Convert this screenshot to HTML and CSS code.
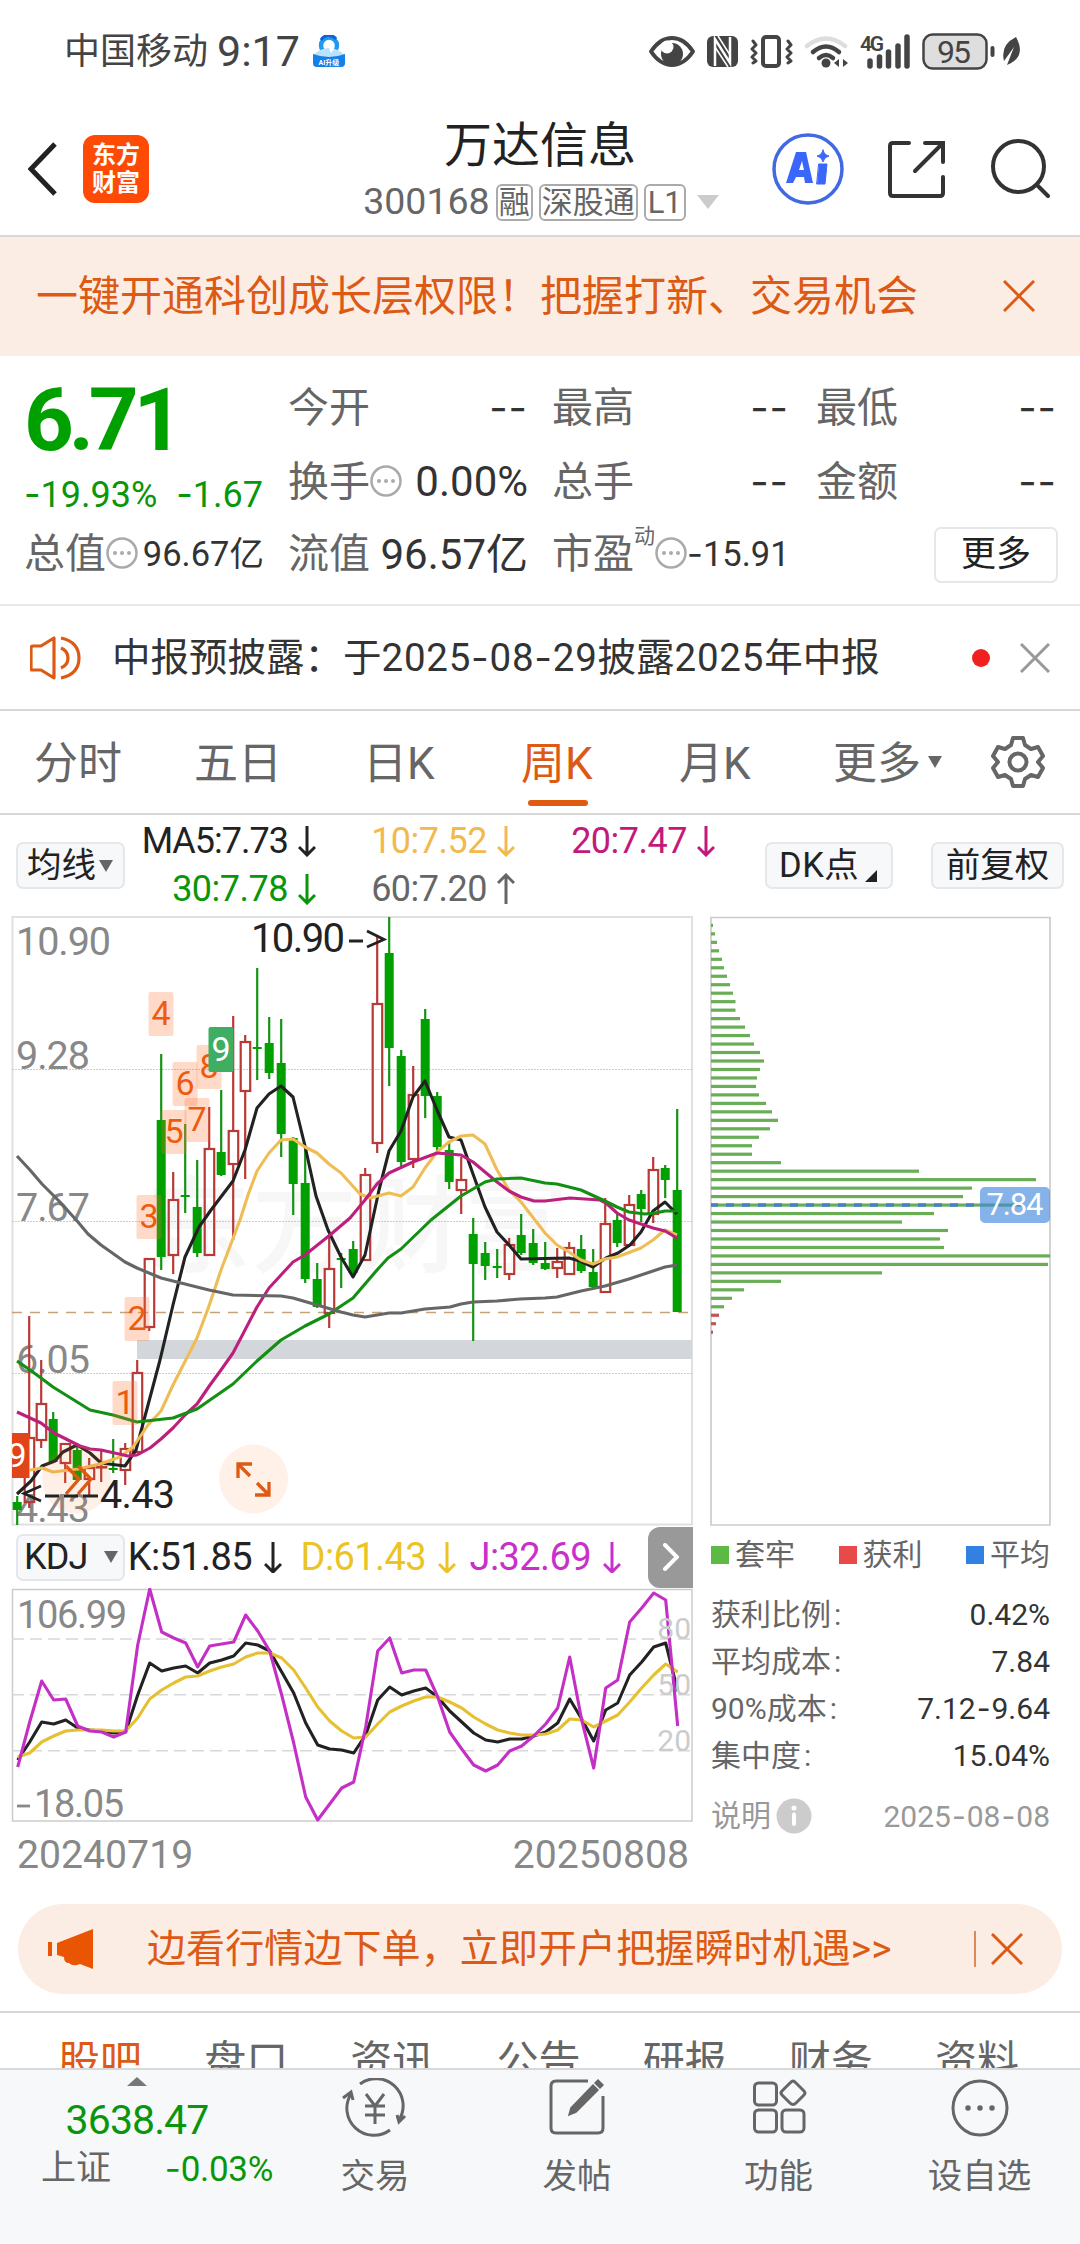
FILE: index.html
```html
<!DOCTYPE html>
<html lang="zh-CN">
<head>
<meta charset="utf-8">
<title>万达信息 300168</title>
<link rel="stylesheet" href="styles.css">
</head>
<body>
<div class="app">
  <div class="status">
    <span class="carrier">中国移动</span><span class="clock">9:17</span>
    <svg class="ai-badge" width="32" height="32" viewBox="0 0 32 32"><circle cx="16" cy="10.500" r="8" fill="#fff" stroke="#1e9bf0" stroke-width="4.500"/><path d="M8 5a9 9 0 0 1 15-1" stroke="#1161d8" stroke-width="3" fill="none"/><path d="M0 20Q16 6 32 20V28Q32 32 28 32H4Q0 32 0 28Z" fill="#b9e2fc"/><path d="M0 19Q16 25 32 19V28Q32 32 28 32H4Q0 32 0 28Z" fill="#1480e8"/><path d="M19 7Q24 13 18 18Q14 12 19 7" fill="#fff"/><text x="16" y="30" font-size="7" font-weight="700" fill="#fff" text-anchor="middle">AI升级</text></svg>
    <svg class="sys" width="375" height="40" viewBox="648 30 375 40">
      <g fill="none" stroke="#444" stroke-width="4" stroke-linecap="round" stroke-linejoin="round">
        <path d="M651 50.500Q660 37 672 37Q684 37 693 50.500Q684 64 672 64Q660 64 651 50.500Z"/>
        <rect x="763" y="36" width="16" height="29" rx="3"/>
        <path d="M753 40l3 4-4 4 4 4-4 4 4 4-3 2M788 40l3 4-4 4 4 4-4 4 4 4-3 2" stroke-width="3"/>
        <path d="M807 45Q826 30 845 45" stroke="#ddd" stroke-width="4.500"/>
        <path d="M813 51Q826 40 839 51M819 57Q826 51 833 57" stroke-width="4.500"/>
        <rect x="923.500" y="33.500" width="63" height="34" rx="9" fill="#dedede" stroke-width="2.500"/>
        <path d="M992.500 47v7"/>
        <path d="M870 60v5M879.500 56v9M888.500 51v14M898 45v20M907 36v29" stroke-width="5.500"/>
      </g>
      <circle cx="672" cy="53" r="11" fill="#444"/><circle cx="667" cy="46" r="6.500" fill="#fff"/>
      <rect x="707" y="35" width="31" height="31" rx="6" fill="#444"/>
      <path d="M715 65V38l15 24V36" stroke="#fff" stroke-width="2.500" fill="none"/><path d="M718 35l12 19M715 46l13 20" stroke="#fff" stroke-width="1.500"/>
      <circle cx="826" cy="62" r="4.500" fill="#444"/><path d="M834 62l5-4v8zM848 62l-5-4v8z" fill="#444"/>
      <text x="860" y="50" font-size="21" font-weight="600" fill="#444" textLength="24">4G</text>
      <text x="954" y="62" font-size="32" fill="#444" text-anchor="middle" textLength="34">95</text>
      <path d="M1016 36Q1000 44 1004 60L1014 46L1007 64Q1027 56 1016 36Z" fill="#444"/>
    </svg>
  </div>

  <header class="head">
    <svg class="back" width="30" height="56" viewBox="0 0 30 56"><path d="M27 3L3 28L27 53" fill="none" stroke="#222" stroke-width="5"/></svg>
    <div class="logo"><span>东方</span><span>财富</span></div>
    <div class="title">
      <h1>万达信息</h1>
      <div class="code"><span>300168</span><b>融</b><b>深股通</b><b>L1</b><i class="tri-light"></i></div>
    </div>
    <svg class="tools" width="280" height="76" viewBox="770 130 280 76" fill="none" stroke="#333" stroke-width="4" stroke-linecap="round">
      <circle cx="808" cy="168" r="34" stroke="#4169e1" stroke-width="3.500"/>
      <path d="M786 182l10-31h10l7 31h-8l-1-6h-8l-3 6z" fill="#3a66fa" stroke="none"/><path d="M799 169l3-9 2 9z" fill="#fff" stroke="none"/>
      <path d="M819 163h8l-2 20h-8zM823 149q1 5 6 6q-5 1-6 6q-1-5-6-6q5-1 6-6" fill="#3a66fa" stroke="#3a66fa" stroke-width="1"/>
      <path d="M909 142H893q-3 0-3 3V192q0 3 3 3H940q3 0 3-3V176M925 142H943V161M942 143L915 170"/>
      <circle cx="1018.500" cy="165.500" r="25.500"/><path d="M1037 184L1048 195"/>
    </svg>
  </header>

  <div class="promo"><span>一键开通科创成长层权限！把握打新、交易机会</span><svg width="32" height="32" viewBox="0 0 32 32"><path d="M1 1L31 31M31 1L1 31" stroke="#dd5a14" stroke-width="3"/></svg></div>

  <section class="quote">
    <div class="last"><strong>6.71</strong></div>
    <div class="cell c1"><span>今开</span><em class="d">--</em></div>
    <div class="cell c2"><span>最高</span><em class="d">--</em></div>
    <div class="cell c3"><span>最低</span><em class="d">--</em></div>
    <div class="change"><span><i class="h">-</i>19.93%</span><span><i class="h">-</i>1.67</span></div>
    <div class="cell c1"><span>换手</span><svg class="more" viewBox="0 0 32 32"><circle cx="16" cy="16" r="14.500"/><path d="M9 16h0M16 16h0M23 16h0"/></svg><em>0.00%</em></div>
    <div class="cell c2"><span>总手</span><em class="d">--</em></div>
    <div class="cell c3"><span>金额</span><em class="d">--</em></div>
    <div class="cell c0"><span>总值</span><svg class="more" viewBox="0 0 32 32"><circle cx="16" cy="16" r="14.500"/><path d="M9 16h0M16 16h0M23 16h0"/></svg><em class="s">96.67亿</em></div>
    <div class="cell c1"><span>流值</span><em>96.57亿</em></div>
    <div class="cell c2"><span>市盈</span><sup>动</sup><svg class="more" viewBox="0 0 32 32"><circle cx="16" cy="16" r="14.500"/><path d="M9 16h0M16 16h0M23 16h0"/></svg><em class="s"><i class="h">-</i>15.91</em></div>
    <div class="cell c3"><button>更多</button></div>
  </section>

  <div class="notice">
    <svg width="52" height="46" viewBox="0 0 52 46" fill="none" stroke="#dd5a14" stroke-width="3.200" stroke-linejoin="round"><path d="M24 3V43L11 35H2Q1 35 1 33V13Q1 11 3 11H11ZM31 13Q38 16 38 23T31 33M31 3Q49 7 49 23T31 43"/></svg>
    <span>中报预披露：于<i class="n">2025<i class="h">-</i>08<i class="h">-</i>29</i>披露<i class="n">2025</i>年中报</span><i class="dot"></i>
    <svg width="30" height="30" viewBox="0 0 30 30"><path d="M1 1L29 29M29 1L1 29" stroke="#999" stroke-width="3"/></svg>
  </div>

  <nav class="periods">
    <span>分时</span><span>五日</span><span>日K</span><span class="on">周K</span><span>月K</span><span class="pm">更多<i class="tri"></i></span>
    <svg width="54" height="54" viewBox="0 0 54 54" fill="none" stroke="#666" stroke-width="4" stroke-linejoin="round"><path d="M22 3H32L34 10L40 14L47 12L52 21L47 27L52 33L47 42L40 40L34 44L32 51H22L20 44L14 40L7 42L2 33L7 27L2 21L7 12L14 14L20 10Z"/><circle cx="27" cy="27" r="8.500"/></svg>
  </nav>

  <div class="legend">
    <button class="ma">均线<i class="tri"></i></button>
    <div class="mas">
      <span class="k">MA5:7.73<svg class="ar" viewBox="0 0 18 32"><path d="M9 1V30M1 22L9 30L17 22"/></svg></span>
      <span class="y">10:7.52<svg class="ar" viewBox="0 0 18 32"><path d="M9 1V30M1 22L9 30L17 22"/></svg></span>
      <span class="m">20:7.47<svg class="ar" viewBox="0 0 18 32"><path d="M9 1V30M1 22L9 30L17 22"/></svg></span>
      <span class="g">30:7.78<svg class="ar" viewBox="0 0 18 32"><path d="M9 1V30M1 22L9 30L17 22"/></svg></span>
      <span class="a">60:7.20<svg class="ar" viewBox="0 0 18 32"><path d="M9 31V2M1 10L9 2L17 10"/></svg></span>
    </div>
    <button class="dk">DK点<i></i></button>
    <button class="fq">前复权</button>
  </div>

  <main class="charts">
    <div class="left">
      <svg id="candles" class="kline" width="690" height="610" viewBox="8 916 690 610"></svg>
      <div class="kdj">
        <button>KDJ<i class="tri"></i></button>
        <span class="k">K:51.85<svg class="ar" viewBox="0 0 18 32"><path d="M9 1V31M1 23L9 31L17 23"/></svg></span>
        <span class="y">D:61.43<svg class="ar" viewBox="0 0 18 32"><path d="M9 1V31M1 23L9 31L17 23"/></svg></span>
        <span class="p">J:32.69<svg class="ar" viewBox="0 0 18 32"><path d="M9 1V31M1 23L9 31L17 23"/></svg></span>
        <div class="next"><svg width="16" height="28" viewBox="0 0 16 28"><path d="M2 2L14 14L2 26" fill="none" stroke="#fff" stroke-width="4" stroke-linecap="round"/></svg></div>
      </div>
      <svg id="osc" width="690" height="236" viewBox="8 1588 690 236"></svg>
      <div class="dates"><span>20240719</span><span>20250808</span></div>
    </div>
    <aside class="right">
      <svg id="chips" width="344" height="610" viewBox="708 916 344 610"></svg>
      <div class="keys"><span><i class="kg"></i>套牢</span><span><i class="kr"></i>获利</span><span><i class="kb"></i>平均</span></div>
      <dl><dt>获利比例<i>:</i></dt><dd>0.42%</dd><dt>平均成本<i>:</i></dt><dd>7.84</dd><dt>90%成本<i>:</i></dt><dd>7.12<i class="h">-</i>9.64</dd><dt>集中度<i>:</i></dt><dd>15.04%</dd></dl>
      <div class="explain"><span>说明</span><svg width="36" height="36" viewBox="0 0 36 36"><circle cx="18" cy="18" r="17.500" fill="#ccc"/><path d="M18 16.500V26" stroke="#fff" stroke-width="4" stroke-linecap="round"/><circle cx="18" cy="10" r="2.500" fill="#fff"/></svg><em>2025<i class="h">-</i>08<i class="h">-</i>08</em></div>
    </aside>
  </main>

  <div class="open">
    <svg width="46" height="40" viewBox="0 0 46 40" fill="#ea5504"><path d="M0 13H4V27H0zM9 14L45 0V40L32 35Q25 38 21 34Q16 34 16 28L9 26Z"/></svg>
    <span>边看行情边下单，立即开户把握瞬时机遇&gt;&gt;</span><i></i>
    <svg width="32" height="32" viewBox="0 0 32 32"><path d="M1 1L31 31M31 1L1 31" stroke="#dd5a14" stroke-width="3"/></svg>
  </div>

  <nav class="tabs"><span class="on">股吧</span><span>盘口</span><span>资讯</span><span>公告</span><span>研报</span><span>财务</span><span>资料</span></nav>

  <footer class="bar">
    <div class="index"><i class="up"></i><strong>3638.47</strong><div><span>上证</span><em><i class="h">-</i>0.03%</em></div></div>
    <div class="act"><svg width="66" height="60" viewBox="0 0 66 60" fill="none" stroke="#666" stroke-width="3"><path d="M18 6A27 27 0 0 1 57 42M48 52A27 27 0 0 1 9 16M1 20L9 14L11 22M63 38L57 44L55 37"/><path d="M24 16L33 28L42 16M33 28V46M23 28H43M23 37H43"/></svg><span>交易</span></div>
    <div class="act"><svg width="66" height="60" viewBox="0 0 66 60" fill="none" stroke="#666" stroke-width="3"><path d="M44 3H12Q7 3 7 8V50Q7 55 12 55H54Q59 55 59 50V18"/><path d="M25 37L27 30L49 7L54 12L32 34ZM51 5L54 2L59 7L56 10Z" fill="#666" stroke-width="1.500"/></svg><span>发帖</span></div>
    <div class="act"><svg width="66" height="60" viewBox="0 0 66 60" fill="none" stroke="#666" stroke-width="3"><rect x="8.500" y="5" width="22" height="22" rx="4"/><path d="M47 3Q48 3 50 5L58 13Q60 15 58 17L50 25Q47 28 44 25L36 17Q34 15 36 13L44 5Q46 3 47 3Z"/><rect x="8.500" y="32" width="22" height="22" rx="4"/><rect x="36" y="32" width="22" height="22" rx="4"/></svg><span>功能</span></div>
    <div class="act"><svg width="66" height="60" viewBox="0 0 66 60" fill="none" stroke="#666" stroke-width="3"><circle cx="33" cy="30" r="27"/><path d="M21 30h0M33 30h0M45 30h0" stroke-width="5.500" stroke-linecap="round"/></svg><span>设自选</span></div>
  </footer>
</div>
<script src="charts.js"></script>
</body>
</html>
```
FILE: styles.css
```css
* { box-sizing: border-box; }
body { margin: 0; background: #fff; font-family: Roboto, "Noto Sans CJK SC", sans-serif; color: #222; }
.app { width: 1080px; height: 2244px; display: flex; flex-direction: column; overflow: hidden; line-height: 1; white-space: nowrap; }
.app > * { flex: none; }
svg { display: block; flex: none; }
svg text { font-family: Roboto, "Noto Sans CJK SC", sans-serif; }
i, em { font-style: normal; }
button { font: inherit; color: #222; padding: 0; background: #f6f8fa; border: 2px solid #e5e7ea; border-radius: 7px; display: flex; align-items: center; line-height: 1; white-space: nowrap; }
.h { font-family: Inter, sans-serif; }
.tri { width: 0; height: 0; border: 7px solid transparent; border-top: 12px solid #666; border-bottom: 0; }

.status { height: 102px; padding: 0 0 0 64px; display: flex; align-items: center; color: #444; }
.carrier { font-size: 36px; width: 153px; padding-top: 2px; }
.clock { font-size: 43px; width: 96px; }
.sys { margin-left: 303px; }

.head { height: 135px; border-bottom: 2px solid #d8d8d8; display: flex; align-items: center; padding-left: 28px; }
.logo { width: 66px; height: 68px; margin-left: 25px; border-radius: 12px; background: #ff4a05; color: #fff; font-size: 24px; font-weight: 700; display: grid; align-content: center; justify-items: center; gap: 4px; }
.title { width: 404px; margin-left: 189px; padding-top: 6px; display: flex; flex-direction: column; align-items: center; }
h1 { margin: 0 0 13px; font-size: 48px; font-weight: 400; }
.code { display: flex; align-items: center; gap: 6px; font-size: 37.500px; color: #666; padding-left: 2px; }
.code b { font-weight: 400; font-size: 31px; height: 37px; line-height: 33px; padding: 0 1px; border: 2px solid #aaa; border-radius: 6px; }
.code b:nth-of-type(3) { padding: 0 2px; }
.tri-light { border: 11px solid transparent; border-top: 14px solid #ccc; border-bottom: 0; margin-left: 5px; }
.tools { margin-left: 28px; }

.promo { height: 119px; background: #fcede4; color: #dd5a14; font-size: 42px; display: flex; align-items: center; padding-left: 36px; }
.promo span { width: 967px; padding-top: 1px; }
.promo svg { margin-top: -2px; }

.quote { height: 250px; border-bottom: 2px solid #eaeaea; padding: 16px 28px 16px 24px; display: grid; grid-template-columns: 237px 237px 237px 237px; column-gap: 27px; grid-template-rows: 72px 76px 69px; align-items: center; color: #666; font-size: 41px; }
.last { align-self: start; }
.last strong { display: block; margin-top: 5px; font-size: 87px; font-weight: 700; color: #00a000; letter-spacing: -5.200px; }
.cell { display: flex; align-items: center; }
.cell em { margin-left: auto; color: #333; font-size: 42px; }
.cell em.d { font-family: Inter, sans-serif; font-size: 40px; font-weight: 400; letter-spacing: 1px; }
.cell em.s { font-size: 34.500px; }
.c0 { width: 240px; }
.c1 { width: 240px; }
.c3 { width: 241px; }
.change { color: #0a960a; font-size: 36px; display: flex; justify-content: space-between; width: 239px; padding-top: 24px; }
.more { width: 32px; height: 32px; fill: none; stroke: #aaa; stroke-width: 2.500; margin-top: -3px; }
.more path { stroke-width: 4; stroke-linecap: round; }
sup { font-size: 21px; align-self: flex-start; margin-top: -8px; line-height: 21px; }
.quote button { width: 124px; height: 56px; margin: 0 -1px 0 auto; background: #fff; font-size: 35px; justify-content: center; }

.notice { height: 105px; border-bottom: 2px solid #d8d8d8; display: flex; align-items: center; padding-left: 30px; font-size: 38.500px; color: #333; }
.notice span { margin-left: 30px; width: 860px; }
.n { letter-spacing: .75px; }
.dot { width: 18px; height: 18px; border-radius: 9px; background: #f02020; margin-right: 30px; }

.periods { height: 104px; border-bottom: 2px solid #d8d8d8; padding-left: 34px; display: grid; grid-template-columns: 160px 169px 158px 158px 154px 158px 54px; align-items: center; font-size: 44px; color: #666; }
.periods span { display: flex; align-items: center; height: 102px; padding-top: 3px; position: relative; }
.periods .tri { margin: -4px 0 0 7px; }
.on { color: #dd5a14; }
.periods .on::after { content: ""; position: absolute; left: 7px; top: 89px; width: 60px; height: 6px; border-radius: 3px; background: #e05a10; }

.legend { height: 101px; display: flex; align-items: center; padding-left: 16px; font-size: 35px; }
.legend button { height: 47px; font-size: 34.500px; }
.ma { width: 109px; padding-left: 9px; }
.ma .tri { margin-left: 3px; }
.mas { width: 640px; display: grid; grid-template-columns: 191px 199px 200px; grid-auto-rows: 48px; align-items: center; align-self: flex-start; padding-top: 2px; font-size: 36px; letter-spacing: -.5px; }
.mas span, .kdj span { display: flex; align-items: center; justify-content: flex-end; }
.mas .k { letter-spacing: -1px; }
.ar { width: 18px; height: 32px; margin-left: 10px; fill: none; stroke: currentColor; stroke-width: 3; }
.k { color: #222; } .y { color: #f2b94c; } .m { color: #c3197d; } .g { color: #0a960a; } .a { color: #666; } .p { color: #c930c9; }
.dk { width: 128px; padding-left: 12px; letter-spacing: .5px; }
.dk i { border: 6px solid #222; border-top-color: transparent; border-left-color: transparent; margin: 20px 0 0 6px; }
.fq { width: 133px; margin-left: 38px; justify-content: center; }

.charts { display: flex; height: 984px; padding-left: 8px; }
.left { width: 700px; }
.kdj { height: 62px; display: flex; align-items: center; padding-left: 8px; font-size: 38px; letter-spacing: -.6px; }
.kdj button { width: 109px; height: 47px; padding: 0 5px 0 6px; font-size: 36px; letter-spacing: -.8px; justify-content: space-between; }
.kdj span { width: 157px; }
.kdj .ar { margin-left: 12px; }
.kdj .y { width: 174px; color: #ecc324; }
.kdj .p { width: 165px; }
.next { width: 45px; height: 61px; margin-left: 27px; background: #999; border-radius: 12px 0 0 12px; display: flex; align-items: center; justify-content: center; }
.dates { display: flex; justify-content: space-between; width: 681px; padding: 12px 0 0 9px; font-size: 39.200px; color: #888; }
.right { width: 342px; color: #666; font-size: 30px; }
.keys { display: flex; justify-content: space-between; width: 342px; padding: 14px 0 0 3px; }
.keys span { display: flex; align-items: center; }
.keys i { width: 18px; height: 18px; margin-right: 6px; }
.kg { background: #5cb944; } .kr { background: #e84a4a; } .kb { background: #3380e3; }
dl { margin: 21px 0 0 3px; width: 339px; display: grid; grid-template-columns: auto 1fr; grid-auto-rows: 47px; align-items: center; }
dt i { margin-left: 3px; }
dd { margin: 0; text-align: right; color: #333; }
.explain { display: flex; align-items: center; margin: 19px 0 0 3px; width: 339px; color: #999; }
.explain svg { margin-left: 5px; }
.explain em { margin-left: auto; }
.explain .h, dd .h { margin: 0 1px; }

.open { margin: 4px 18px 0; height: 90px; border-radius: 45px; background: #fcede4; color: #dd5a14; font-size: 39px; display: flex; align-items: center; padding-left: 30px; }
.open span { margin-left: 53px; width: 827px; letter-spacing: .1px; }
.open i { width: 2px; height: 36px; background: #dd8a5a; margin-right: 15px; }

.tabs { margin-top: 17px; height: 57px; overflow: hidden; border-top: 2px solid #d8d8d8; display: flex; justify-content: space-between; padding: 28px 61px 0 58px; font-size: 42px; color: #666; }

.bar { height: 177px; background: #f7f8fa; border-top: 2px solid #d8d8d8; display: grid; grid-template-columns: 274px 202px 202px 201px 201px; }
.index { display: flex; flex-direction: column; align-items: center; color: #0a960a; font-size: 35px; }
.up { border: 10px solid transparent; border-bottom: 9px solid #777; border-top: 0; margin-top: 7px; }
.index strong { font-weight: 400; font-size: 41px; margin-top: 14px; letter-spacing: -.9px; }
.index > div { display: flex; justify-content: space-between; width: 232px; margin: 10px 0 0 40px; }
.index em { letter-spacing: -.3px; }
.index span { color: #666; font-size: 35px; }
.act { display: flex; flex-direction: column; align-items: center; gap: 21px; padding-top: 8px; color: #666; font-size: 34.500px; }
```
FILE: charts.js
```js
const line = (pts, color, w) => `<polyline points="${pts}" fill="none" stroke="${color}" stroke-width="${w || 3.1}" stroke-linejoin="round"/>`;
const X = i => 17.2 + 12 * i;

// Each candle: direction, high, body top, body bottom, low.
const candles = [
  ['g',1496,1502,1510,1525],['r',1316,1437,1503,1508],['r',1360,1403,1441,1448],['g',1412,1419,1462,1462],['r',1443,1443,1464,1483],
  ['g',1445,1450,1480,1480],['r',1458,1467,1480,1495],['r',1450,1466,1468,1482],['g',1439,1468,1470,1473],['r',1443,1448,1471,1485],
  ['r',1360,1372,1453,1453],['r',1258,1258,1328,1331],['g',1054,1120,1257,1270],['r',1172,1199,1256,1274],['g',1124,1195,1197,1213],
  ['g',1160,1207,1253,1257],['r',1107,1148,1256,1256],['g',1090,1152,1175,1176],['r',1016,1130,1165,1240],['r',1035,1041,1092,1179],
  ['g',968,1047,1049,1080],['g',1017,1043,1073,1079],['g',1019,1063,1134,1157],['g',1137,1138,1184,1215],['g',1147,1183,1279,1283],
  ['g',1263,1279,1307,1308],['r',1235,1268,1314,1328],['g',1253,1258,1260,1288],['g',1241,1249,1273,1276],['r',1168,1174,1261,1261],
  ['r',936,1003,1144,1153],['g',917,953,1048,1086],['g',1050,1056,1162,1166],['r',1066,1094,1160,1168],['g',1009,1019,1096,1118],
  ['g',1092,1096,1147,1152],['g',1141,1150,1182,1189],['r',1157,1179,1191,1214],['g',1218,1234,1264,1341],['g',1242,1253,1266,1280],
  ['g',1249,1266,1268,1278],['r',1238,1244,1275,1280],['g',1214,1235,1253,1255],['g',1229,1243,1263,1265],['g',1242,1263,1269,1270],
  ['r',1248,1261,1269,1278],['r',1242,1247,1275,1275],['g',1235,1249,1271,1273],['g',1249,1272,1287,1289],['r',1198,1223,1293,1293],
  ['g',1213,1220,1243,1247],['r',1195,1204,1246,1246],['g',1190,1194,1209,1222],['r',1157,1169,1215,1223],['g',1165,1168,1180,1198],
  ['g',1109,1190,1312,1312]];

let s = `<text x="145" y="1264" font-size="106" font-weight="500" fill="#f7f7f7">东方财富</text>
<rect x="12.500" y="917" width="679.500" height="607.500" fill="none" stroke="#e0e0e0" stroke-width="2"/>`;
for (const y of [1069.5, 1221.5, 1373.5]) s += `<path d="M12 ${y}H692" stroke="#ccc" stroke-dasharray="2 1"/>`;
s += `<path d="M12 1312.500H692" stroke="#c4a27a" stroke-width="1.500" stroke-dasharray="10 8"/><rect x="137" y="1340" width="555" height="19" fill="#d3d7dc"/>`;
for (const [y, t] of [[954.5,'10.90'],[1069,'9.28'],[1221,'7.67'],[1373,'6.05'],[1522,'4.43']])
  s += `<text x="16" y="${y}" font-size="39.500" fill="#888" textLength="${t.length > 4 ? 95 : 74}">${t}</text>`;
candles.forEach(([c, h, t, b, l], i) => {
  const x = X(i);
  if (c === 'g') s += `<path d="M${x} ${h}V${l}" stroke="#139313" stroke-width="2.200"/><rect x="${x - 4.5}" y="${t}" width="9" height="${b - t}" fill="#00a000"/>`;
  else s += `<path d="M${x} ${h}V${t}M${x} ${b}V${l}" stroke="#b93a35" stroke-width="2.200"/><rect x="${x - 4.5}" y="${t + 1}" width="9.500" height="${Math.max(b - t - 2, .5)}" fill="none" stroke="#b93a35" stroke-width="2.200"/>`;
});
s += line('17,1494 31,1481 42,1466 55,1461 63,1452 77,1445 90,1453 101,1463 125,1466 136,1450 148,1405 160,1360 173,1305 185,1257 199,1227 211,1210 233,1181 245,1150 257,1108 269,1094 281,1086 293,1097 305,1146 316,1196 328,1230 341,1257 353,1277 365,1255 379,1190 389,1151 401,1131 413,1097 425,1081 437,1110 449,1137 461,1140 473,1174 485,1207 497,1232 509,1245 521,1259 569,1258 580,1261 593,1267 606,1258 618,1253 630,1245 641,1232 653,1211 665,1202 677,1214', '#222');
s += line('30,1470 42,1468 53,1472 78,1469 100,1464 120,1457 133,1447 148,1425 161,1411 173,1385 197,1338 209,1306 221,1270 240,1220 248,1195 257,1171 269,1153 281,1140 293,1139 305,1147 317,1153 329,1164 341,1173 360,1194 370,1198 389,1193 401,1196 413,1187 425,1168 437,1152 449,1142 461,1136 473,1135 485,1144 497,1170 509,1190 521,1202 545,1233 557,1245 569,1252 581,1260 593,1264 605,1259 617,1257 641,1248 653,1240 665,1230 677,1235', '#efbd55');
s += line('17,1412 41,1423 54,1433 80,1446 90,1449 101,1450 128,1456 137,1455 150,1448 161,1439 173,1428 185,1415 197,1404 210,1385 221,1370 233,1353 245,1330 257,1307 269,1288 281,1275 293,1262 305,1255 330,1235 350,1218 365,1200 377,1184 389,1173 413,1162 437,1153 461,1155 473,1162 497,1182 509,1191 521,1197 534,1201 545,1201 570,1198 600,1200 606,1203 617,1213 629,1220 641,1224 653,1228 665,1231 677,1238', '#bd207c');
s += line('17,1361 30,1370 41,1378 53,1387 90,1410 113,1415 137,1422 173,1418 197,1409 233,1384 257,1361 281,1340 305,1326 329,1314 353,1298 377,1270 388,1258 401,1249 431,1220 461,1196 485,1182 497,1179 521,1178 545,1183 557,1184 581,1190 605,1201 617,1207 629,1212 645,1214 655,1213 665,1211 677,1211', '#138f13');
s += line('17,1156 30,1170 42,1184 60,1202 78,1222 88,1234 101,1245 125,1262 137,1268 161,1278 185,1284 209,1290 233,1295 281,1296 293,1298 317,1305 341,1312 353,1315 365,1317 389,1313 401,1313 425,1309 450,1307 461,1304 473,1302 497,1301 520,1299 545,1298 557,1297 581,1291 605,1286 629,1279 653,1271 665,1267 677,1265', '#666');
s += `<circle cx="76.500" cy="1479" r="34.500" fill="#f96a20" fill-opacity=".11"/><circle cx="253.500" cy="1479" r="34.500" fill="#fff0e8"/>
<path d="M66 1466L79 1479L66 1494M78 1466L91 1479L78 1494M238 1478V1464H252M238 1464L250 1476M269 1482V1495H255M269 1495L257 1483" fill="none" stroke="#dd5a14" stroke-width="3.300"/>`;
for (const [x, y, n] of [[149,992,4],[137,1195,3],[125,1297,2],[113,1381,1],[162,1110,5],[173,1062,6],[185,1098,7],[197,1045,8]])
  s += `<rect x="${x - .5}" y="${y}" width="25" height="44" rx="2" fill="#ff7030" fill-opacity=".26"/><text x="${x + 12}" y="${y + 33}" font-size="34" fill="#ee5a10" text-anchor="middle">${n}</text>`;
s += `<rect x="208.500" y="1027" width="25" height="45" rx="2" fill="#40ae62"/><text x="221" y="1060.500" font-size="34" fill="#fff" text-anchor="middle">9</text>
<rect x="12" y="1433" width="17.500" height="45" fill="#e04418"/><svg x="12" y="1433" width="17.500" height="45" viewBox="12 1433 17.500 45"><text x="17" y="1467" font-size="34" fill="#fff" text-anchor="middle">9</text></svg>
<text x="251" y="952" font-size="40" fill="#222" textLength="94">10.90</text><path d="M349 941H363M367 931L384 939.500L367 947" fill="none" stroke="#222" stroke-width="2.800"/>
<text x="100" y="1507.500" font-size="39.500" fill="#222" textLength="75">4.43</text><path d="M45 1496H59M64 1496H78M83 1496H98M41 1486L24 1493.500L41 1501" fill="none" stroke="#222" stroke-width="2.800"/>`;
document.getElementById('candles').innerHTML = s;

// KDJ oscillator, one value per week.
const K = [1760,1742,1722,1724,1720,1728,1730,1731,1733,1732,1695,1663,1671,1668,1666,1673,1663,1660,1656,1643,1645,1651,1672,1693,1723,1745,1749,1750,1753,1735,1700,1687,1695,1691,1688,1697,1711,1722,1733,1740,1742,1739,1739,1736,1732,1723,1699,1719,1741,1710,1703,1675,1662,1647,1643,1691];
const D = [1757,1753,1742,1736,1731,1730,1730,1730,1731,1731,1718,1699,1690,1683,1677,1676,1671,1667,1664,1657,1653,1653,1658,1670,1688,1707,1721,1731,1738,1737,1724,1712,1706,1701,1697,1697,1702,1708,1717,1724,1730,1733,1735,1735,1734,1730,1719,1720,1727,1721,1715,1702,1688,1675,1664,1672];
const J = [1767,1722,1681,1700,1699,1726,1731,1732,1737,1732,1645,1589,1632,1638,1643,1667,1646,1644,1642,1615,1631,1651,1695,1743,1797,1820,1804,1788,1782,1727,1651,1638,1673,1670,1670,1697,1732,1749,1765,1771,1765,1751,1746,1736,1724,1708,1657,1720,1768,1688,1680,1622,1608,1593,1600,1726];
const pts = a => a.map((y, i) => `${X(i) + .5},${y}`).join(' ');
let o = '<rect x="12.500" y="1589.500" width="679.500" height="231.500" fill="none" stroke="#ccc" stroke-width="1.500"/>';
for (const y of [1639, 1694.7, 1750.7]) o += `<path d="M12 ${y}H692" stroke="#d8d8d8" stroke-width="1.500" stroke-dasharray="12 6"/>`;
o += '<text x="17" y="1628" font-size="38" fill="#888" textLength="110">106.99</text><text x="34" y="1817" font-size="38" fill="#888" textLength="90">18.05</text><path d="M17 1806H30" stroke="#888" stroke-width="2.800"/>';
o += line(pts(K), '#222') + line(pts(D), '#e6c030') + line(pts(J), '#c42fc6');
for (const [y, t] of [[1638.5, 80], [1694.5, 50], [1750.5, 20]]) o += `<text x="691" y="${y}" font-size="30" fill="#ccc" text-anchor="end">${t}</text>`;
document.getElementById('osc').innerHTML = o;

// Chip distribution bar lengths, from the highest price down.
const chips = [2,4,6,8,11,13,16,19,22,24.5,24.5,29,34,39,43,49,53,49,46,45,48,55,61,67,59,48,41,41,70,208,325,261,252,311,223,191,237,229,233,339,337,171,70,33,21,13,8,5,2];
let c = '<path d="M711 917.500H1050V1525H711Z" fill="none" stroke="#ccc" stroke-width="1.700"/>';
chips.forEach((w, i) => c += `<rect x="711" y="${923.8 + i * 8.475}" width="${w}" height="3.200" fill="${i > 45 ? '#c25555' : '#69ad56'}"/>`);
c += '<path d="M711 1205H980" stroke="#4680c8" stroke-width="3.500" stroke-dasharray="8 8" stroke-dashoffset="1"/><rect x="980" y="1187" width="70" height="36" rx="5" fill="#3d86dc" fill-opacity=".63"/><text x="1015" y="1215" font-size="31" fill="#fff" text-anchor="middle" textLength="57">7.84</text>';
document.getElementById('chips').innerHTML = c;
```
